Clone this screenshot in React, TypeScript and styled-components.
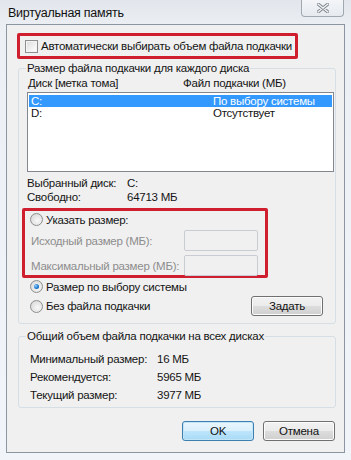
import React from 'react';
import styled, { createGlobalStyle, css } from 'styled-components';

const GlobalStyle = createGlobalStyle`
    html, body {
        margin: 0;
        padding: 0;
        background: #eef2f6;
    }
    body {
        font-family: 'Liberation Sans', Arial, sans-serif;
        font-size: 11.5px;
        letter-spacing: -0.25px;
        color: #141414;
        white-space: nowrap;
    }
`;

const Window = styled.div`
    width: 351px;
    height: 460px;
    box-sizing: border-box;
    display: flex;
    flex-direction: column;
    background: linear-gradient(180deg, #e2e6ec 0%, #ecf0f4 6%, #f1f4f8 100%);
    overflow: hidden;
`;

const TitleBar = styled.div`
    height: 24px;
    display: flex;
    align-items: flex-start;
    justify-content: space-between;
    padding: 0 7px 0 8px;
`;

const Title = styled.div`
    font-size: 12.5px;
    color: #111;
    padding-top: 6px;
`;

const CloseButton = styled.div`
    width: 43px;
    height: 17px;
    box-sizing: border-box;
    border: 1px solid #a2a8b0;
    border-top: none;
    border-radius: 0 0 4px 4px;
    background: linear-gradient(180deg, #f3f5f8 0%, #e6eaef 100%);
    display: flex;
    align-items: center;
    justify-content: center;
`;

const Client = styled.div`
    margin: 0 6px 0 6px;
    height: 429px;
    box-sizing: border-box;
    border: 1px solid #8c96a2;
    background: #f0f0f0;
    display: flex;
    flex-direction: column;
    padding: 8px 0 0 10px;
`;

const RedFrame = styled.div<{ $w: number; $h: number }>`
    width: ${(p) => p.$w}px;
    height: ${(p) => p.$h}px;
    box-sizing: border-box;
    border: 3px solid #cf1f2e;
    border-radius: 2px;
`;

const CheckRow = styled.label`
    display: flex;
    align-items: center;
    gap: 3px;
    height: 20px;
    padding-left: 5px;
`;

const CheckBox = styled.span`
    width: 13px;
    height: 13px;
    box-sizing: border-box;
    border: 1px solid #8e8f8f;
    background: linear-gradient(135deg, #dcdcdc 0%, #f6f6f6 70%, #ffffff 100%);
    box-shadow: inset 0 0 0 1px #f4f4f4;
`;

const Group = styled.fieldset<{ $h: number }>`
    margin: 0;
    padding: 0;
    width: 318px;
    height: ${(p) => p.$h}px;
    box-sizing: border-box;
    border: 1px solid #d5dfe5;
    border-radius: 3px;
    margin-left: 1px;
`;

const Legend = styled.legend`
    padding: 0 1px;
    margin-left: 7px;
    line-height: 14px;
`;

const Headers = styled.div`
    display: grid;
    grid-template-columns: 155px 1fr;
    padding-left: 9px;
    height: 16px;
    line-height: 16px;
`;

const ListBox = styled.div`
    margin: 1px 0 0 8px;
    width: 307px;
    height: 80px;
    box-sizing: border-box;
    border: 1px solid #828790;
    background: #fff;
    padding: 2px 0 0 0;
`;

const ListRow = styled.div<{ $selected?: boolean }>`
    display: grid;
    grid-template-columns: 182px 1fr;
    height: 12px;
    line-height: 12px;
    padding: 0 0 0 2px;
    margin: 0 1px;
    ${(p) =>
        p.$selected &&
        css`
            background: #3399ff;
            color: #fff;
        `}
`;

const InfoRow = styled.div<{ $col: number; $h: number }>`
    display: grid;
    grid-template-columns: ${(p) => p.$col}px 1fr;
    height: ${(p) => p.$h}px;
    line-height: ${(p) => p.$h}px;
`;

const InfoBlock = styled.div<{ $left: number; $top: number }>`
    padding-left: ${(p) => p.$left}px;
    margin-top: ${(p) => p.$top}px;
`;

const SizeFrame = styled.div`
    margin: 4px 0 0 3px;
`;

const RadioRow = styled.label<{ $h?: number; $pad?: number }>`
    display: flex;
    align-items: center;
    gap: 3px;
    height: ${(p) => p.$h ?? 19}px;
    padding-left: ${(p) => p.$pad ?? 0}px;
`;

const Radio = styled.span<{ $on?: boolean }>`
    width: 13px;
    height: 13px;
    box-sizing: border-box;
    border-radius: 50%;
    border: 1px solid #8e8f8f;
    background: radial-gradient(circle at 60% 60%, #f8f8f8 0%, #e2e2e2 60%, #cfcfcf 100%);
    display: flex;
    align-items: center;
    justify-content: center;
    &::after {
        content: '';
        display: ${(p) => (p.$on ? 'block' : 'none')};
        width: 5px;
        height: 5px;
        border-radius: 50%;
        background: radial-gradient(circle at 35% 35%, #8ad0ff 0%, #1a73c9 60%, #0c4e94 100%);
    }
`;

const SizeField = styled.div`
    display: grid;
    grid-template-columns: 153px 74px;
    align-items: center;
    padding-left: 6px;
    height: 25px;
    color: #8d8d8d;
`;

const TextInput = styled.div`
    width: 74px;
    height: 21px;
    box-sizing: border-box;
    border: 1px solid #c9cdd3;
    border-radius: 2px;
    background: #f0f0f0;
`;

const Button = styled.div<{ $default?: boolean }>`
    width: 72px;
    height: 20px;
    box-sizing: border-box;
    border: 1px solid ${(p) => (p.$default ? '#3c7fb1' : '#707070')};
    border-radius: 3px;
    display: flex;
    align-items: center;
    justify-content: center;
    background: ${(p) =>
        p.$default
            ? 'linear-gradient(180deg, #eaf6fd 0%, #d9f0fc 50%, #bee6fd 51%, #a7d9f5 100%)'
            : 'linear-gradient(180deg, #f2f2f2 0%, #ebebeb 50%, #dddddd 51%, #cfcfcf 100%)'};
    box-shadow: inset 0 0 0 1px ${(p) => (p.$default ? '#c4e5f6' : '#fcfcfc')};
    color: #111;
`;

const SystemRows = styled.div`
    display: flex;
    flex-direction: column;
    padding-left: 11px;
    margin-top: -1px;
`;

const BottomRow = styled.div`
    display: flex;
    align-items: center;
    justify-content: space-between;
    padding-right: 12px;
`;

const Footer = styled.div`
    display: flex;
    justify-content: flex-end;
    gap: 9px;
    padding-right: 9px;
    margin-top: 13px;
`;

const Spacer = styled.div<{ $h: number }>`
    height: ${(p) => p.$h}px;
`;

function CloseGlyph() {
    return (
        <svg width="12" height="10" viewBox="0 0 12 10">
            <path d="M1 1 L11 9 M11 1 L1 9" stroke="#7d848c" strokeWidth="3.2" strokeLinecap="round" />
            <path d="M1 1 L11 9 M11 1 L1 9" stroke="#f4f6f8" strokeWidth="1.4" strokeLinecap="round" />
        </svg>
    );
}

export default function App() {
    return (
        <>
            <GlobalStyle />
            <Window>
                <TitleBar>
                    <Title>Виртуальная память</Title>
                    <CloseButton>
                        <CloseGlyph />
                    </CloseButton>
                </TitleBar>
                <Client>
                    <RedFrame $w={281} $h={26}>
                        <CheckRow>
                            <CheckBox />
                            Автоматически выбирать объем файла подкачки
                        </CheckRow>
                    </RedFrame>
                    <Spacer $h={2} />
                    <Group $h={263}>
                        <Legend>Размер файла подкачки для каждого диска</Legend>
                        <Headers>
                            <span>Диск [метка тома]</span>
                            <span>Файл подкачки (МБ)</span>
                        </Headers>
                        <ListBox>
                            <ListRow $selected>
                                <span>C:</span>
                                <span>По выбору системы</span>
                            </ListRow>
                            <ListRow>
                                <span>D:</span>
                                <span>Отсутствует</span>
                            </ListRow>
                        </ListBox>
                        <InfoBlock $left={8} $top={4}>
                            <InfoRow $col={100} $h={14}>
                                <span>Выбранный диск:</span>
                                <span>C:</span>
                            </InfoRow>
                            <InfoRow $col={100} $h={14}>
                                <span>Свободно:</span>
                                <span>64713 МБ</span>
                            </InfoRow>
                        </InfoBlock>
                        <SizeFrame>
                            <RedFrame $w={246} $h={70}>
                                <RadioRow $h={17} $pad={5}>
                                    <Radio />
                                    Указать размер:
                                </RadioRow>
                                <SizeField>
                                    <span>Исходный размер (МБ):</span>
                                    <TextInput />
                                </SizeField>
                                <SizeField>
                                    <span>Максимальный размер (МБ):</span>
                                    <TextInput />
                                </SizeField>
                            </RedFrame>
                        </SizeFrame>
                        <SystemRows>
                            <RadioRow>
                                <Radio $on />
                                Размер по выбору системы
                            </RadioRow>
                            <BottomRow>
                                <RadioRow>
                                    <Radio />
                                    Без файла подкачки
                                </RadioRow>
                                <Button>Задать</Button>
                            </BottomRow>
                        </SystemRows>
                    </Group>
                    <Spacer $h={5} />
                    <Group $h={79}>
                        <Legend>Общий объем файла подкачки на всех дисках</Legend>
                        <InfoBlock $left={11} $top={7}>
                            <InfoRow $col={127} $h={18}>
                                <span>Минимальный размер:</span>
                                <span>16 МБ</span>
                            </InfoRow>
                            <InfoRow $col={127} $h={18}>
                                <span>Рекомендуется:</span>
                                <span>5965 МБ</span>
                            </InfoRow>
                            <InfoRow $col={127} $h={18}>
                                <span>Текущий размер:</span>
                                <span>3977 МБ</span>
                            </InfoRow>
                        </InfoBlock>
                    </Group>
                    <Footer>
                        <Button $default>OK</Button>
                        <Button>Отмена</Button>
                    </Footer>
                </Client>
            </Window>
        </>
    );
}
